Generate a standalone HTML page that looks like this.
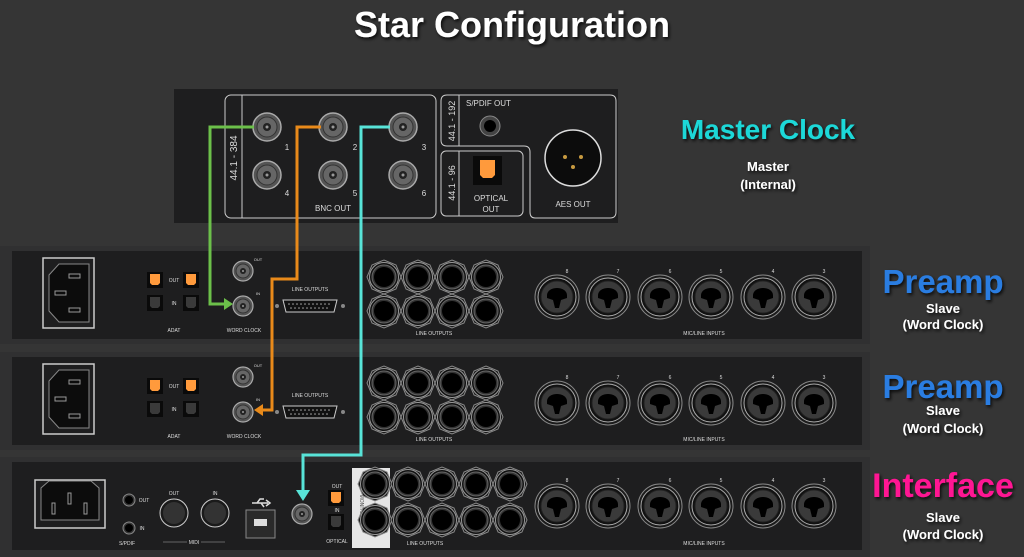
<!DOCTYPE html>
<html><head><meta charset="utf-8"><style>
html,body{margin:0;padding:0;background:#353535;}
svg{display:block}
text{font-family:"Liberation Sans",sans-serif;}
.t{fill:#ddd;font-size:5px;text-anchor:middle}
.lbl{font-weight:bold;text-anchor:middle}
</style></head><body>
<svg width="1024" height="557" viewBox="0 0 1024 557" xmlns="http://www.w3.org/2000/svg">
<defs>
<filter id="sh" x="-10%" y="-10%" width="130%" height="140%"><feDropShadow dx="1.5" dy="2" stdDeviation="1.5" flood-color="#000" flood-opacity="0.8"/></filter>
<g id="bnc"><circle r="14" fill="#555" stroke="#aaa" stroke-width="1.5"/><circle r="10" fill="#666" stroke="#333" stroke-width="1"/><circle r="4" fill="#222"/><circle r="1.5" fill="#999"/></g>
<g id="bncs"><circle r="10" fill="#555" stroke="#aaa" stroke-width="1.2"/><circle r="7" fill="#666" stroke="#333"/><circle r="3" fill="#222"/><circle r="1" fill="#999"/></g>
<g id="jack"><polygon points="-17,0 -12,-12 0,-17 12,-12 17,0 12,12 0,17 -12,12" fill="#1a1a1a" stroke="#888" stroke-width="1"/><circle r="14.5" fill="#111" stroke="#999" stroke-width="1"/><circle r="12" fill="#333" stroke="#666"/><circle r="10" fill="#000"/></g>
<g id="xlr"><circle r="22" fill="#1b1b1b" stroke="#888" stroke-width="1"/><circle r="19" fill="#111" stroke="#aaa" stroke-width="1"/><circle r="16" fill="#3a3a3a" stroke="#222"/><path d="M-10,-2 A10,7 0 0 1 10,-2 L10,1 L4,3 L2,11 L-2,11 L-4,3 L-10,1 Z" fill="#000"/></g>
<g id="iec"><rect x="-26" y="-35" width="51" height="70" fill="none" stroke="#ccc" stroke-width="1.5"/><path d="M-20,-18 L-10,-29 L20,-29 L20,29 L-10,29 L-20,18 Z" fill="#0c0c0c" stroke="#888"/><rect x="0" y="-19" width="11" height="4" fill="none" stroke="#999"/><rect x="-14" y="-2" width="11" height="4" fill="none" stroke="#999"/><rect x="0" y="15" width="11" height="4" fill="none" stroke="#999"/></g>
<g id="optO"><rect x="-8" y="-8" width="16" height="16" fill="#0a0a0a"/><path d="M-5,-6 H5 V3 L3,5 H-3 L-5,3Z" fill="#ff9a3c"/></g>
<g id="optI"><rect x="-8" y="-8" width="16" height="16" fill="#0a0a0a"/><path d="M-5,-6 H5 V3 L3,5 H-3 L-5,3Z" fill="#3a3a3a"/></g>
<g id="db"><path d="M-27,-6 H27 L24,6 H-24 Z" fill="#111" stroke="#ccc" stroke-width="1"/><g fill="#aaa"><circle cx="-21" cy="-2" r=".8"/><circle cx="-17" cy="-2" r=".8"/><circle cx="-13" cy="-2" r=".8"/><circle cx="-9" cy="-2" r=".8"/><circle cx="-5" cy="-2" r=".8"/><circle cx="-1" cy="-2" r=".8"/><circle cx="3" cy="-2" r=".8"/><circle cx="7" cy="-2" r=".8"/><circle cx="11" cy="-2" r=".8"/><circle cx="15" cy="-2" r=".8"/><circle cx="19" cy="-2" r=".8"/><circle cx="-19" cy="2" r=".8"/><circle cx="-15" cy="2" r=".8"/><circle cx="-11" cy="2" r=".8"/><circle cx="-7" cy="2" r=".8"/><circle cx="-3" cy="2" r=".8"/><circle cx="1" cy="2" r=".8"/><circle cx="5" cy="2" r=".8"/><circle cx="9" cy="2" r=".8"/><circle cx="13" cy="2" r=".8"/><circle cx="17" cy="2" r=".8"/></g><circle cx="-33" cy="0" r="2" fill="#888"/><circle cx="33" cy="0" r="2" fill="#888"/></g>
<g id="pre">
<rect x="0" y="-5" width="870" height="98" fill="#303031"/>
<rect x="12" y="0" width="850" height="88" fill="#1e1e1f"/>
<use href="#iec" x="69" y="42"/>
<use href="#optO" x="155" y="29"/><use href="#optO" x="191" y="29"/>
<use href="#optI" x="155" y="52"/><use href="#optI" x="191" y="52"/>
<text class="t" x="174" y="31">OUT</text><text class="t" x="174" y="54">IN</text>
<text class="t" x="174" y="81">ADAT</text>
<use href="#bncs" x="243" y="20"/><use href="#bncs" x="243" y="55"/>
<text class="t" x="258" y="10" style="font-size:4px">OUT</text><text class="t" x="258" y="44" style="font-size:4px">IN</text>
<text class="t" x="244" y="81">WORD CLOCK</text>
<use href="#db" x="310" y="55"/><text class="t" x="310" y="40">LINE OUTPUTS</text>
<use href="#jack" x="384" y="26"/><use href="#jack" x="418" y="26"/><use href="#jack" x="452" y="26"/><use href="#jack" x="486" y="26"/>
<use href="#jack" x="384" y="60"/><use href="#jack" x="418" y="60"/><use href="#jack" x="452" y="60"/><use href="#jack" x="486" y="60"/>
<text class="t" x="434" y="84">LINE OUTPUTS</text>
<use href="#xlr" x="557" y="46"/><use href="#xlr" x="608" y="46"/><use href="#xlr" x="660" y="46"/><use href="#xlr" x="711" y="46"/><use href="#xlr" x="763" y="46"/><use href="#xlr" x="814" y="46"/>
<text class="t" x="567" y="22">8</text><text class="t" x="618" y="22">7</text><text class="t" x="670" y="22">6</text><text class="t" x="721" y="22">5</text><text class="t" x="773" y="22">4</text><text class="t" x="824" y="22">3</text>
<text class="t" x="704" y="84">MIC/LINE INPUTS</text>
</g>
</defs>

<text class="lbl" x="512" y="37" fill="#fff" font-size="36" filter="url(#sh)">Star Configuration</text>

<rect x="174" y="89" width="444" height="134" fill="#1e1e1f"/>
<rect x="225" y="95" width="211" height="123" rx="6" fill="none" stroke="#ccc" stroke-width="1"/>
<line x1="242" y1="95" x2="242" y2="218" stroke="#ccc"/>
<text x="237" y="158" class="t" style="font-size:10px" transform="rotate(-90 237 158)">44.1 - 384</text>
<use href="#bnc" x="267" y="127"/><use href="#bnc" x="333" y="127"/><use href="#bnc" x="403" y="127"/>
<use href="#bnc" x="267" y="175"/><use href="#bnc" x="333" y="175"/><use href="#bnc" x="403" y="175"/>
<g class="t" style="font-size:8px"><text x="287" y="150">1</text><text x="355" y="150">2</text><text x="424" y="150">3</text><text x="287" y="196">4</text><text x="355" y="196">5</text><text x="424" y="196">6</text></g>
<text class="t" x="333" y="211" style="font-size:8px">BNC OUT</text>
<path d="M447,95 H610 Q616,95 616,101 V212 Q616,218 610,218 H535 Q530,218 530,212 V152 Q530,146 524,146 H447 Q441,146 441,140 V101 Q441,95 447,95Z" fill="none" stroke="#ccc"/>
<line x1="459" y1="95" x2="459" y2="146" stroke="#ccc"/>
<text x="455" y="121" class="t" style="font-size:9px" transform="rotate(-90 455 121)">44.1 - 192</text>
<text x="466" y="106" fill="#ddd" font-size="8">S/PDIF OUT</text>
<circle cx="490" cy="126" r="10" fill="#444" stroke="#888"/><circle cx="490" cy="126" r="6" fill="#000"/>
<rect x="441" y="151" width="82" height="65" rx="5" fill="none" stroke="#ccc"/>
<line x1="459" y1="151" x2="459" y2="216" stroke="#ccc"/>
<text x="455" y="183" class="t" style="font-size:9px" transform="rotate(-90 455 183)">44.1 - 96</text>
<rect x="473" y="156" width="29" height="29" fill="#0a0a0a"/><path d="M480,160 H495 V175 L492,178 H483 L480,175Z" fill="#ff9a3c"/>
<text class="t" x="491" y="201" style="font-size:8px">OPTICAL</text><text class="t" x="491" y="212" style="font-size:8px">OUT</text>
<circle cx="573" cy="158" r="28" fill="#0c0c0c" stroke="#ddd" stroke-width="1.5"/>
<circle cx="565" cy="157" r="2" fill="#c79a40"/><circle cx="581" cy="157" r="2" fill="#c79a40"/><circle cx="573" cy="167" r="2" fill="#c79a40"/>
<text class="t" x="573" y="207" style="font-size:8px">AES OUT</text>

<use href="#pre" y="251"/>
<use href="#pre" y="357"/>

<rect x="0" y="457" width="870" height="100" fill="#303031"/>
<rect x="12" y="462" width="850" height="88" fill="#1e1e1f"/>
<rect x="35" y="480" width="70" height="48" fill="none" stroke="#ccc" stroke-width="1.5"/>
<path d="M41,488 L49,481 H91 L99,488 V520 H41 Z" fill="#0c0c0c" stroke="#888"/>
<rect x="52" y="503" width="3" height="11" fill="none" stroke="#999"/><rect x="68" y="493" width="3" height="11" fill="none" stroke="#999"/><rect x="84" y="503" width="3" height="11" fill="none" stroke="#999"/>
<circle cx="129" cy="500" r="6" fill="#333" stroke="#888"/><circle cx="129" cy="500" r="4" fill="#000"/>
<circle cx="129" cy="528" r="6" fill="#333" stroke="#888"/><circle cx="129" cy="528" r="4" fill="#000"/>
<text class="t" x="144" y="502">OUT</text><text class="t" x="142" y="530">IN</text><text class="t" x="127" y="545">S/PDIF</text>
<circle cx="174" cy="513" r="14" fill="#1a1a1a" stroke="#ccc"/><circle cx="174" cy="513" r="11" fill="#333"/>
<circle cx="215" cy="513" r="14" fill="#1a1a1a" stroke="#ccc"/><circle cx="215" cy="513" r="11" fill="#333"/>
<text class="t" x="174" y="495">OUT</text><text class="t" x="215" y="495">IN</text>
<line x1="163" y1="542" x2="225" y2="542" stroke="#aaa" stroke-width=".6"/><rect x="187" y="539" width="14" height="6" fill="#1e1e1f"/><text class="t" x="194" y="544">MIDI</text>
<path d="M252,503 H268 M266,500 L270,503 L266,506 M257,503 L260,499 H264 M261,503 L264,507" stroke="#ddd" stroke-width="1.5" fill="none"/>
<rect x="246" y="510" width="29" height="28" fill="#2a2a2a" stroke="#888"/><rect x="254" y="519" width="13" height="7" fill="#ddd"/>
<use href="#bncs" x="302" y="514"/>
<use href="#optO" x="336" y="498"/><use href="#optI" x="336" y="522"/>
<text class="t" x="337" y="488">OUT</text><text class="t" x="337" y="512">IN</text><text class="t" x="337" y="543">OPTICAL</text>
<rect x="352" y="468" width="38" height="80" fill="#e6e6e6"/>
<text x="360" y="508" class="t" style="font-size:5px;fill:#555" transform="rotate(90 360 508)">MONITORS</text>
<use href="#jack" x="375" y="484"/><use href="#jack" x="375" y="520"/>
<use href="#jack" x="408" y="484"/><use href="#jack" x="442" y="484"/><use href="#jack" x="476" y="484"/><use href="#jack" x="510" y="484"/>
<use href="#jack" x="408" y="520"/><use href="#jack" x="442" y="520"/><use href="#jack" x="476" y="520"/><use href="#jack" x="510" y="520"/>
<text class="t" x="425" y="545">LINE OUTPUTS</text>
<use href="#xlr" x="557" y="506"/><use href="#xlr" x="608" y="506"/><use href="#xlr" x="660" y="506"/><use href="#xlr" x="711" y="506"/><use href="#xlr" x="763" y="506"/><use href="#xlr" x="814" y="506"/>
<text class="t" x="567" y="482">8</text><text class="t" x="618" y="482">7</text><text class="t" x="670" y="482">6</text><text class="t" x="721" y="482">5</text><text class="t" x="773" y="482">4</text><text class="t" x="824" y="482">3</text>
<text class="t" x="704" y="545">MIC/LINE INPUTS</text>

<path d="M254,127 H210 V304 H226" fill="none" stroke="#6cc04a" stroke-width="3"/>
<path d="M224,298 L233,304 L224,310Z" fill="#6cc04a"/>
<path d="M321,127 H297 V279 H272 V410 H262" fill="none" stroke="#e98a1a" stroke-width="3"/>
<path d="M263,404 L254,410 L263,416Z" fill="#e98a1a"/>
<path d="M390,127 H361 V455 H303 V492" fill="none" stroke="#58e4d8" stroke-width="3"/>
<path d="M296,490 L303,501 L310,490Z" fill="#58e4d8"/>

<g filter="url(#sh)">
<text class="lbl" x="768" y="139" fill="#1fd8d8" font-size="28">Master Clock</text>
<text class="lbl" x="768" y="171" fill="#fff" font-size="13">Master</text>
<text class="lbl" x="768" y="189" fill="#fff" font-size="13">(Internal)</text>
<text class="lbl" x="943" y="293" fill="#2a7de1" font-size="33">Preamp</text>
<text class="lbl" x="943" y="313" fill="#fff" font-size="13">Slave</text>
<text class="lbl" x="943" y="329" fill="#fff" font-size="13">(Word Clock)</text>
<text class="lbl" x="943" y="398" fill="#2a7de1" font-size="33">Preamp</text>
<text class="lbl" x="943" y="415" fill="#fff" font-size="13">Slave</text>
<text class="lbl" x="943" y="433" fill="#fff" font-size="13">(Word Clock)</text>
<text class="lbl" x="943" y="497" fill="#ff1493" font-size="34">Interface</text>
<text class="lbl" x="943" y="522" fill="#fff" font-size="13">Slave</text>
<text class="lbl" x="943" y="539" fill="#fff" font-size="13">(Word Clock)</text>
</g>
</svg>
</body></html>
